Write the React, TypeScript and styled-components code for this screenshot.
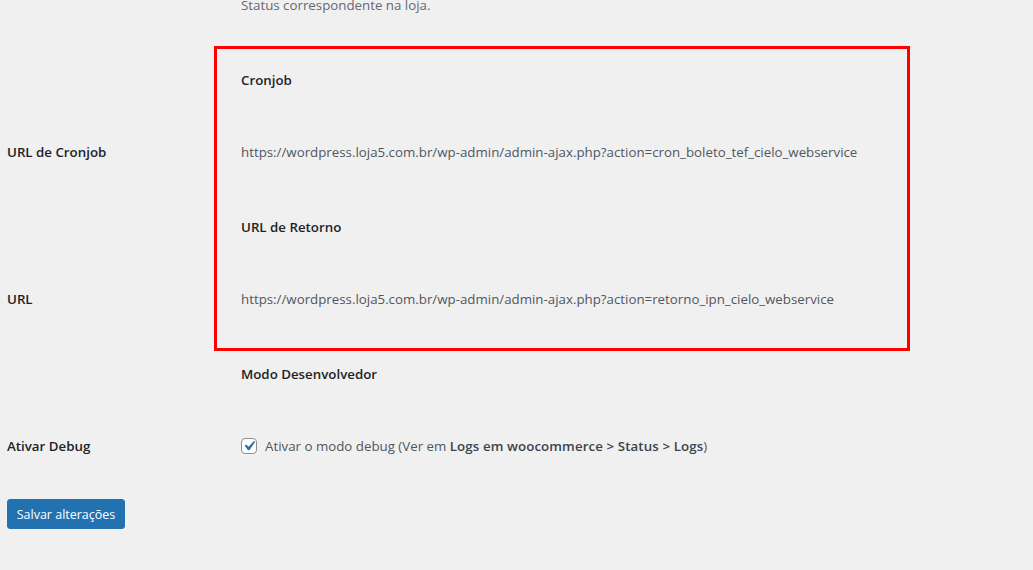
import React from 'react';
import styled, { createGlobalStyle } from 'styled-components';

const GlobalStyle = createGlobalStyle`
    html, body {
        margin: 0;
        padding: 0;
        background: #f0f0f1;
    }

    body {
        font-family: "Open Sans", "Noto Sans", sans-serif;
        font-size: 13.3px;
        color: #3c434a;
        overflow: hidden;
    }
`;

const Page = styled.div`
    position: relative;
    width: 1033px;
    height: 570px;
    padding-left: 7px;
    box-sizing: border-box;
`;

const Description = styled.p`
    margin: 0 0 31px 234px;
    height: 10px;
    line-height: 10px;
    color: #646970;
`;

const Row = styled.div<{ $heading?: boolean }>`
    display: flex;
    align-items: center;
    height: ${p => (p.$heading ? '75px' : '72px')};
    padding-top: ${p => (p.$heading ? '3px' : '0')};
    box-sizing: border-box;
`;

const Label = styled.div`
    width: 234px;
    flex-shrink: 0;
    font-weight: 600;
    color: #1d2327;
`;

const Value = styled.div`
    color: #50575e;
`;

const SectionTitle = styled.div`
    font-weight: 600;
    color: #1d2327;
`;

const CheckLabel = styled.label`
    display: flex;
    align-items: center;
    gap: 8px;
    color: #50575e;

    strong {
        font-weight: 600;
        color: #3c434a;
        letter-spacing: 0.1px;
    }
`;

const Box = styled.span`
    width: 16px;
    height: 16px;
    box-sizing: border-box;
    border: 1px solid #8c8f94;
    border-radius: 4px;
    background: #fff;
    display: flex;
    align-items: center;
    justify-content: center;
    overflow: visible;

    svg {
        flex-shrink: 0;
    }
`;

const SaveButton = styled.button`
    margin-top: 17px;
    width: 118px;
    height: 30px;
    background: #2271b1;
    border: 1px solid #2271b1;
    border-radius: 3px;
    color: #fff;
    font-family: inherit;
    font-size: 12.5px;
    padding: 0;
`;

// anotação vermelha por cima do print
const Highlight = styled.div`
    position: absolute;
    left: 214px;
    top: 46px;
    width: 696px;
    height: 305px;
    box-sizing: border-box;
    border: 3px solid #ff0000;
    pointer-events: none;
`;

const App = () => {
    return (
        <React.Fragment>
            <GlobalStyle />
            <Page>
                <Description>Status correspondente na loja.</Description>
                <Row $heading>
                    <Label />
                    <SectionTitle>Cronjob</SectionTitle>
                </Row>
                <Row>
                    <Label>URL de Cronjob</Label>
                    <Value>https://wordpress.loja5.com.br/wp-admin/admin-ajax.php?action=cron_boleto_tef_cielo_webservice</Value>
                </Row>
                <Row $heading>
                    <Label />
                    <SectionTitle>URL de Retorno</SectionTitle>
                </Row>
                <Row>
                    <Label>URL</Label>
                    <Value>https://wordpress.loja5.com.br/wp-admin/admin-ajax.php?action=retorno_ipn_cielo_webservice</Value>
                </Row>
                <Row $heading>
                    <Label />
                    <SectionTitle>Modo Desenvolvedor</SectionTitle>
                </Row>
                <Row>
                    <Label>Ativar Debug</Label>
                    <CheckLabel>
                        <Box>
                            <svg width="20" height="20" viewBox="0 0 20 20">
                                <path d="M14.83 4.89l1.34.94-5.81 8.38H9.02L5.78 9.67l1.34-1.25 2.57 2.4z" fill="#2271b1" />
                            </svg>
                        </Box>
                        <span>Ativar o modo debug (Ver em <strong>Logs em woocommerce &gt; Status &gt; Logs</strong>)</span>
                    </CheckLabel>
                </Row>
                <SaveButton>Salvar alterações</SaveButton>
                <Highlight />
            </Page>
        </React.Fragment>
    );
};

export default App;
